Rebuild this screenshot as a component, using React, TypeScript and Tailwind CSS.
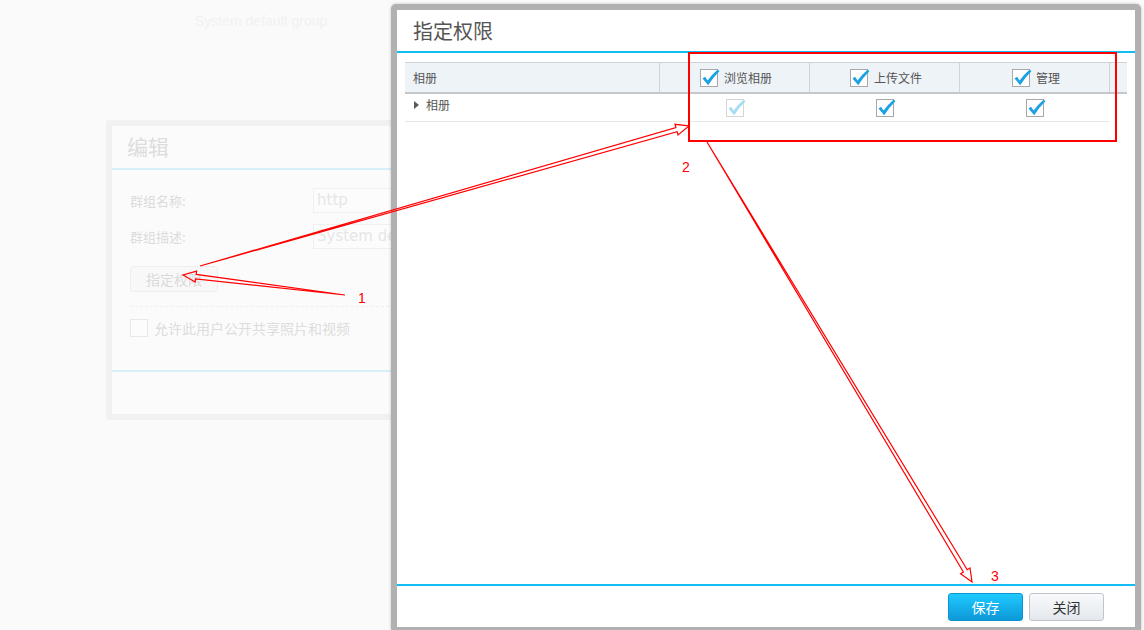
import React from "react";

const CJK = '"Noto Sans CJK SC", "Noto Sans", sans-serif';

function Check({ faded }: { faded?: boolean }) {
  return (
    <span
      className={
        faded
          ? "relative inline-block w-[18px] h-[18px] border border-[#d6d6d6] bg-white shrink-0"
          : "relative inline-block w-[18px] h-[18px] border border-[#a8a8a8] bg-white shrink-0"
      }
    >
      <svg className="absolute left-[-1px] top-[-1px] overflow-visible" width="18" height="18" viewBox="0 0 18 18">
        <path
          d="M2.5 9.5 L5 7.8 L7.6 11.6 Q12 5.5 17.8 0.6 L19.4 2.2 Q13 8.5 8.2 16.2 Z"
          fill={faded ? "#a6dcf4" : "#1ba2e4"}
        />
      </svg>
    </span>
  );
}

function arrowPoints(tx: number, ty: number, hx: number, hy: number) {
  const dx = hx - tx;
  const dy = hy - ty;
  const len = Math.hypot(dx, dy);
  const ux = dx / len;
  const uy = dy / len;
  const nx = -uy;
  const ny = ux;
  const bx = hx - ux * 13;
  const by = hy - uy * 13;
  const sw = 2.2;
  const hw = 5.5;
  const pts = [
    [tx, ty],
    [bx + nx * sw, by + ny * sw],
    [bx + nx * hw, by + ny * hw],
    [hx, hy],
    [bx - nx * hw, by - ny * hw],
    [bx - nx * sw, by - ny * sw],
  ];
  return pts.map((p) => p[0].toFixed(1) + "," + p[1].toFixed(1)).join(" ");
}

export default function App() {
  return (
    <div className="relative w-[1144px] h-[630px] overflow-hidden bg-[#fafafa]" style={{ fontFamily: CJK }}>
      {/* background page */}
      <div className="h-[120px] pt-[11px] pl-[195px] text-[14px] leading-[20px] text-[#f1f1f1]" style={{ fontFamily: '"Liberation Sans", Arial, sans-serif' }}>
        System default group
      </div>
      <div className="ml-[106px] w-[560px] h-[300px] rounded-[4px] border-[6px] border-[#f1f1f1] bg-[#fbfbfb] flex flex-col">
        <div className="h-[44px] pl-[15px] flex items-center border-b-2 border-[#d7eff9] text-[21px] text-[#dddddd]">编辑</div>
        <div className="pl-[18px] pt-[18px] flex flex-col">
          <div className="flex items-center h-[25px]">
            <span className="w-[183px] text-[13px] text-[#dcdcdc]">群组名称:</span>
            <div className="w-[220px] h-[25px] border border-[#f0f0f0] bg-[#fcfcfc] pl-[3px] text-[15px] leading-[23px] text-[#e6e6e6]" style={{ fontFamily: '"DejaVu Sans", sans-serif' }}>http</div>
          </div>
          <div className="flex items-center h-[25px] mt-[11px]">
            <span className="w-[183px] text-[13px] text-[#dcdcdc]">群组描述:</span>
            <div className="w-[220px] h-[25px] border border-[#f0f0f0] bg-[#fcfcfc] pl-[3px] text-[15px] leading-[23px] text-[#e6e6e6]" style={{ fontFamily: '"DejaVu Sans", sans-serif' }}>System default group</div>
          </div>
          <div className="mt-[17px] w-[88px] h-[26px] rounded-[3px] border border-[#efefef] bg-[#f8f8f8] flex items-center justify-center text-[14px] text-[#dadada]">指定权限</div>
          <div className="mt-[14px] mr-[10px] border-t border-dashed border-[#efefef]"></div>
          <div className="mt-[12px] h-[18px] flex items-center gap-[6px]">
            <span className="w-[18px] h-[18px] border border-[#e8e8e8] bg-[#fcfcfc]"></span>
            <span className="text-[14px] leading-[18px] text-[#dddddd]">允许此用户公开共享照片和视频</span>
          </div>
        </div>
        <div className="mt-[33px] border-t-2 border-[#d7eff9]"></div>
      </div>

      {/* dialog */}
      <div className="absolute left-[391px] top-[4px] w-[750px] h-[629px] rounded-[5px] border-[6px] border-[#b1b1b1] bg-white flex flex-col shadow-[0_0_3px_rgba(0,0,0,0.25)]">
        <div className="h-[43px] pl-[16px] flex items-center text-[20px] text-[#555555] border-b-2 border-[#12bdf4]">指定权限</div>
        <div className="flex-1 pt-[9px] px-[8px]">
          <div className="w-[722px]">
            <div className="flex h-[32px] bg-[#eef3f8] border-t border-[#cfd3d7] border-b-2 border-b-[#c4c8cc] text-[12px] text-[#555555]">
              <div className="w-[255px] pl-[8px] flex items-center border-r border-[#d2d5d8]">相册</div>
              <div className="w-[150px] pl-[3px] flex items-center justify-center gap-[6px] border-r border-[#d2d5d8]"><Check /><span>浏览相册</span></div>
              <div className="w-[150px] pl-[3px] flex items-center justify-center gap-[6px] border-r border-[#d2d5d8]"><Check /><span>上传文件</span></div>
              <div className="w-[150px] pl-[3px] flex items-center justify-center gap-[6px] border-r border-[#d2d5d8]"><Check /><span>管理</span></div>
              <div className="flex-1"></div>
            </div>
            <div className="flex h-[28px] w-[705px] border-b border-[#e8e8e8] text-[12px] text-[#555555]">
              <div className="w-[255px] pl-[9px] pb-[5px] flex items-center gap-[7px]">
                <svg width="5" height="8" viewBox="0 0 5 8"><path d="M0 0 L5 4 L0 8 Z" fill="#5a5a5a" /></svg>
                <span>相册</span>
              </div>
              <div className="w-[150px] flex items-center justify-center"><Check faded /></div>
              <div className="w-[150px] flex items-center justify-center"><Check /></div>
              <div className="w-[150px] flex items-center justify-center"><Check /></div>
            </div>
          </div>
        </div>
        <div className="border-t-2 border-[#12bdf4] h-[43px] pt-[7px] pr-[31px] flex justify-end gap-[6px]">
          <button className="w-[75px] h-[28px] rounded-[3px] border border-[#0d93d0] bg-gradient-to-b from-[#1fcaff] to-[#0e98d8] text-white text-[14px]">保存</button>
          <button className="w-[75px] h-[28px] rounded-[3px] border border-[#bfc5cb] bg-gradient-to-b from-[#f8fafc] to-[#e4e8ec] text-[#333333] text-[14px]">关闭</button>
        </div>
      </div>

      {/* annotations */}
      <svg className="absolute left-0 top-0 pointer-events-none" width="1144" height="630" viewBox="0 0 1144 630">
        <rect x="689" y="53" width="427" height="88" fill="none" stroke="#ff0000" strokeWidth="2" />
        <polygon points={arrowPoints(345, 295, 183, 275)} fill="none" stroke="#ff0000" strokeWidth="1.2" />
        <polygon points={arrowPoints(200, 266, 689, 126)} fill="none" stroke="#ff0000" strokeWidth="1.2" />
        <polygon points={arrowPoints(707, 142, 972, 582)} fill="none" stroke="#ff0000" strokeWidth="1.2" />
        <text x="358" y="303" fill="#ff0000" fontSize="14" fontFamily="Liberation Sans, sans-serif">1</text>
        <text x="682" y="172" fill="#ff0000" fontSize="14" fontFamily="Liberation Sans, sans-serif">2</text>
        <text x="991" y="581" fill="#ff0000" fontSize="14" fontFamily="Liberation Sans, sans-serif">3</text>
      </svg>
    </div>
  );
}
